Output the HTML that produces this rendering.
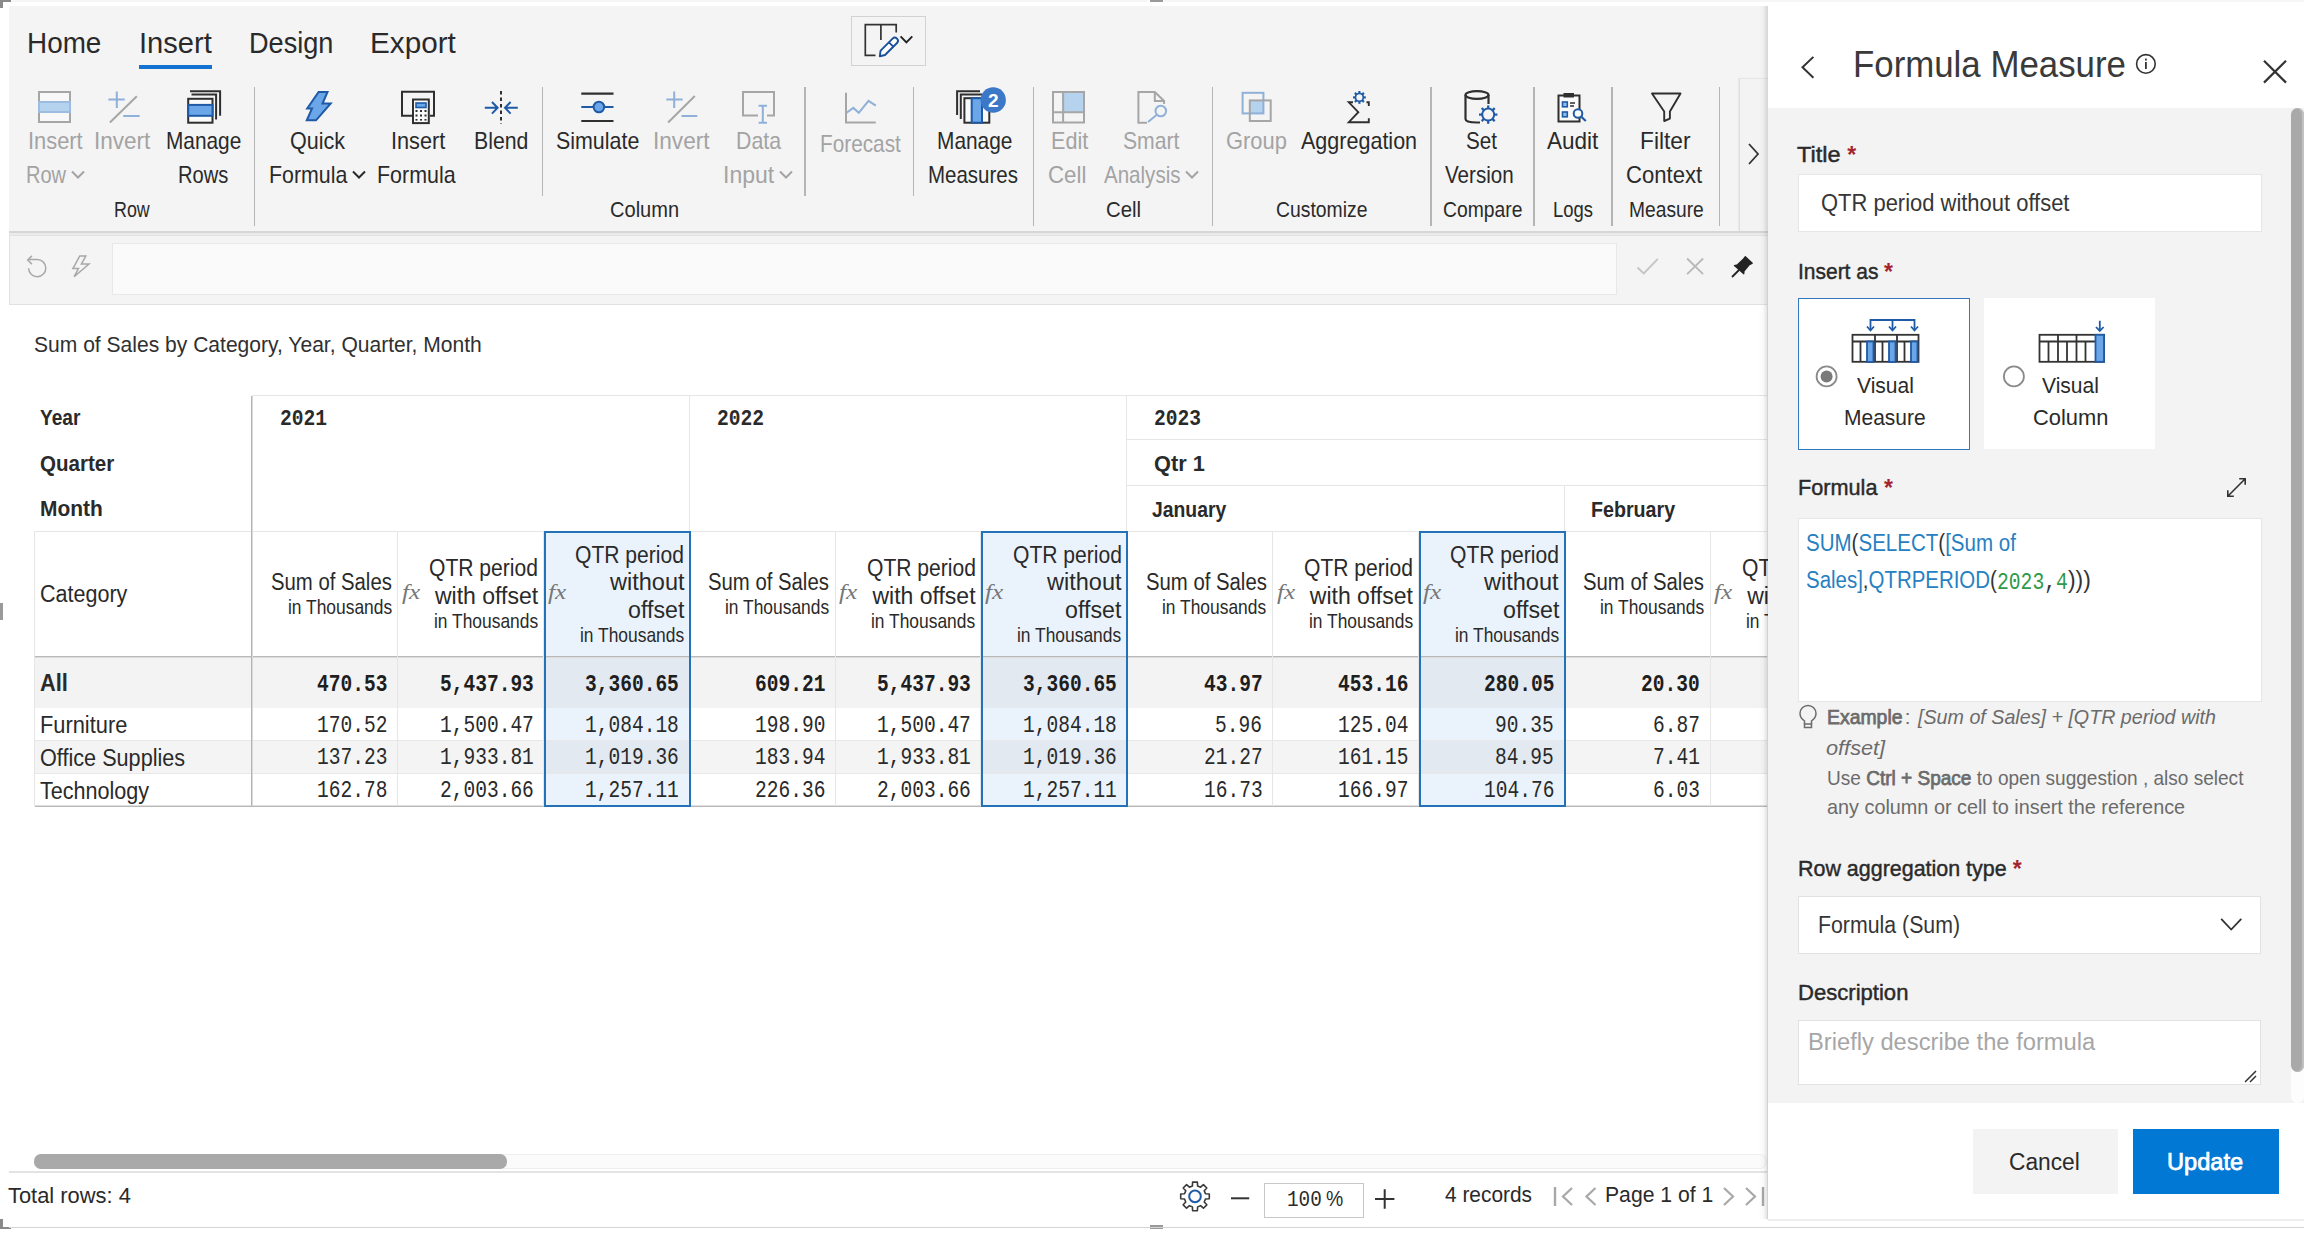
<!DOCTYPE html>
<html><head><meta charset="utf-8"><title>Formula Measure</title>
<style>
html,body{margin:0;padding:0;background:#fff;overflow:hidden;}
body{width:2304px;height:1235px;overflow:hidden;position:relative;font-family:"Liberation Sans",sans-serif;}
.a{position:absolute;}
.t{white-space:pre;transform-origin:0 50%;}
svg.a{overflow:visible;}
</style></head><body>
<div class="a" style="left:0;top:0;width:1768px;height:1235px;overflow:hidden">
<div class="a" style="left:9.0px;top:6.0px;width:1759.0px;height:225.0px;background:#f4f4f4;"></div>
<div class="a" style="left:9.0px;top:231.0px;width:1759.0px;height:2.0px;background:#d6d6d6;"></div>
<div class="a" style="left:9.0px;top:233.0px;width:1759.0px;height:2.0px;background:#ebebeb;"></div>
<div class="a" style="left:9.0px;top:235.0px;width:1759.0px;height:70.0px;background:#f4f4f4;border:1px solid #e2e2e2;box-sizing:border-box;"></div>
<div class="a" style="left:112.0px;top:243.0px;width:1505.0px;height:52.0px;background:#fafafa;border:1px solid #e8e8e8;box-sizing:border-box;"></div>
<div class="a" style="left:0.0px;top:0.0px;width:11.0px;height:2.0px;background:#8a8a8a;"></div>
<div class="a" style="left:0.0px;top:0.0px;width:3.0px;height:8.0px;background:#8a8a8a;"></div>
<div class="a" style="left:1150.0px;top:0.0px;width:13.0px;height:2.0px;background:#9a9a9a;"></div>
<div class="a" style="left:0.0px;top:1227.0px;width:11.0px;height:2.0px;background:#8a8a8a;"></div>
<div class="a" style="left:0.0px;top:1219.0px;width:3.0px;height:10.0px;background:#8a8a8a;"></div>
<div class="a" style="left:1150.0px;top:1225.0px;width:13.0px;height:4.0px;background:#9a9a9a;"></div>
<div class="a" style="left:0.0px;top:603.0px;width:3.0px;height:17.0px;background:#9a9a9a;"></div>
<div class="a" style="left:138.5px;top:64.5px;width:73.0px;height:4.5px;background:#1373d0;"></div>
<div class="a" style="left:851.0px;top:16.0px;width:75.0px;height:49.5px;border:1.5px solid #d2d2d2;box-sizing:border-box;"></div>
<svg class="a" style="left:860px;top:20px" width="60" height="42" viewBox="860 20 60 42">
<path d="M875.5 55.4 H865.3 V24.6 H896.2 V32.5 M880.9 24.6 V40.1" fill="none" stroke="#333" stroke-width="1.7"/>
<path d="M879.8 56.2 L880.6 50.6 L892.6 38.6 A3.1 3.1 0 0 1 897 43 L885 55 Z" fill="#fff" stroke="#1a4f9c" stroke-width="1.9" stroke-linejoin="round"/>
<path d="M888.9 42.3 L893.3 46.7" stroke="#1a4f9c" stroke-width="1.9"/>
<path d="M900.6 36.4 L906.4 42.4 L912.3 36.4" fill="none" stroke="#222" stroke-width="1.9"/>
</svg>
<div class="a" style="left:253.8px;top:86.5px;width:1.5px;height:139.5px;background:#b5b5b5;"></div>
<div class="a" style="left:1032.8px;top:86.5px;width:1.5px;height:139.5px;background:#b5b5b5;"></div>
<div class="a" style="left:1211.5px;top:86.5px;width:1.5px;height:139.5px;background:#b5b5b5;"></div>
<div class="a" style="left:1430.2px;top:86.5px;width:1.5px;height:139.5px;background:#b5b5b5;"></div>
<div class="a" style="left:1533.2px;top:86.5px;width:1.5px;height:139.5px;background:#b5b5b5;"></div>
<div class="a" style="left:1611.0px;top:86.5px;width:1.5px;height:139.5px;background:#b5b5b5;"></div>
<div class="a" style="left:1718.5px;top:86.5px;width:1.5px;height:139.5px;background:#b5b5b5;"></div>
<div class="a" style="left:541.6px;top:86.5px;width:1.5px;height:109.0px;background:#b5b5b5;"></div>
<div class="a" style="left:804.2px;top:86.5px;width:1.5px;height:109.0px;background:#b5b5b5;"></div>
<div class="a" style="left:912.6px;top:86.5px;width:1.5px;height:109.0px;background:#b5b5b5;"></div>
<svg class="a" style="left:70.0px;top:170.0px" width="16" height="10" viewBox="0 0 16 10"><path d="M2 1.5 L8 7.5 L14 1.5" fill="none" stroke="#a3a3a3" stroke-width="2"/></svg>
<svg class="a" style="left:351.3px;top:170.0px" width="16" height="10" viewBox="0 0 16 10"><path d="M2 1.5 L8 7.5 L14 1.5" fill="none" stroke="#2a2a2a" stroke-width="2"/></svg>
<svg class="a" style="left:777.6px;top:170.0px" width="16" height="10" viewBox="0 0 16 10"><path d="M2 1.5 L8 7.5 L14 1.5" fill="none" stroke="#a3a3a3" stroke-width="2"/></svg>
<svg class="a" style="left:1184.0px;top:170.0px" width="16" height="10" viewBox="0 0 16 10"><path d="M2 1.5 L8 7.5 L14 1.5" fill="none" stroke="#a3a3a3" stroke-width="2"/></svg>
<div class="a" style="left:1738.6px;top:77.8px;width:29.4px;height:153.2px;background:#f3f3f3;border-left:1.5px solid #dedede;border-top:1.5px solid #e6e6e6;box-sizing:border-box;box-shadow:-1px 0 1px rgba(0,0,0,0.04);"></div>
<svg class="a" style="left:1746px;top:142px" width="16" height="24" viewBox="0 0 16 24"><path d="M3 2 L12 12 L3 22" fill="none" stroke="#333" stroke-width="1.8"/></svg>

<svg class="a" style="left:0;top:0" width="1768" height="235" viewBox="0 0 1768 235">
<g fill="none" stroke-width="2">
 <!-- insert row -->
 <rect x="39" y="92" width="31" height="30" stroke="#a6a6a6" fill="#f8f8f8"/>
 <rect x="39" y="102" width="31" height="10" fill="#b5d2ef" stroke="#9cbde0"/>
 <!-- invert row -->
 <path d="M116.8 91.5 V108 M108.4 99.4 H124.7 M123.2 116.1 H139.6" stroke="#8fb0d8"/>
 <path d="M109.9 122.5 L136.8 96.2" stroke="#a6a6a6"/>
 <!-- manage rows -->
 <path d="M190 91.2 H220.1 V115.8" stroke="#2f2f2f"/>
 <path d="M191.5 94.6 H216.1 V119.5" stroke="#2f2f2f"/>
 <rect x="188.2" y="98.8" width="24.3" height="23.9" stroke="#2f2f2f" fill="#fafafa"/>
 <rect x="188.2" y="104.9" width="24.3" height="10.9" stroke="#1f5aa6" fill="#6aa6e8"/>
 <!-- quick formula -->
 <path d="M318.6 92 L327.5 92 L322.5 103.5 L330.7 103.5 L316 120.3 L306.8 120.3 L312 108.5 L307.2 108.5 Z" fill="#6aa6e8" stroke="#1f5aa6" stroke-linejoin="miter"/>
 <!-- insert formula -->
 <path d="M412 115.7 H402 V91.8 H434 V115.7 H430" stroke="#2f2f2f"/>
 <rect x="413" y="99.5" width="15.8" height="23.6" stroke="#2f2f2f" fill="#fafafa"/>
 <rect x="416" y="103" width="10" height="4.5" stroke="#1f5aa6" fill="#6aa6e8" stroke-width="1.6"/>
 <g fill="#2f2f2f" stroke="none"><rect x="415.5" y="110" width="2" height="2"/><rect x="420" y="110" width="2" height="2"/><rect x="424.5" y="110" width="2" height="2"/>
 <rect x="415.5" y="114.5" width="2" height="2"/><rect x="420" y="114.5" width="2" height="2"/><rect x="424.5" y="114.5" width="2" height="2"/>
 <rect x="415.5" y="119" width="2" height="1.6"/><rect x="420" y="119" width="2" height="1.6"/><rect x="424.5" y="119" width="2" height="1.6"/></g>
 <!-- blend -->
 <path d="M501 91 V124" stroke="#2f2f2f" stroke-dasharray="3.5 3"/>
 <path d="M484.8 107.8 H497.6 M492 102 L497.6 107.8 L492 113.6 M505 107.8 H517.8 M510.6 102 L505 107.8 L510.6 113.6" stroke="#1f5aa6"/>
 <!-- simulate -->
 <path d="M581.3 93.6 H613.5 M581.3 121 H613.5" stroke="#2f2f2f" stroke-width="2.2"/>
 <path d="M581.3 107 H613.5" stroke="#1f5aa6" stroke-width="2.2"/>
 <circle cx="598.9" cy="107" r="5.3" fill="#6aa6e8" stroke="#1f5aa6"/>
 <!-- invert col -->
 <path d="M674.2 91.5 V108 M666.3 99.4 H682.7 M681.5 116.1 H697.3" stroke="#8fb0d8"/>
 <path d="M668.1 122.5 L694.8 96" stroke="#a6a6a6"/>
 <!-- data input -->
 <path d="M758 115.5 H743 V92 H774 V115.5 H767" stroke="#a6a6a6"/>
 <path d="M762.8 105.7 V122.7 M758.6 105.7 H767 M758.6 122.7 H767" stroke="#8fb0d8"/>
 <!-- forecast -->
 <path d="M846 92.8 V122.5 H875.8" stroke="#a6a6a6"/>
 <path d="M846.6 112.8 L853.3 107.9 L858.8 112.8 L868.5 100.9 L875.8 105.7" stroke="#8fb0d8"/>
 <!-- manage measures -->
 <path d="M957.1 115 V91.2 H980" stroke="#2f2f2f"/>
 <path d="M960.8 119 V94.6 H982" stroke="#2f2f2f"/>
 <rect x="964.4" y="98.2" width="24.9" height="24.5" stroke="#2f2f2f" fill="#fafafa"/>
 <rect x="971.7" y="98.2" width="10.3" height="24.5" stroke="#1f5aa6" fill="#6aa6e8"/>
 <circle cx="993.2" cy="100" r="12.7" fill="#3b78c8" stroke="none"/>
 <!-- edit cell -->
 <rect x="1063.1" y="92" width="21" height="20.2" fill="#b5d2ef" stroke="none"/>
 <rect x="1053" y="92" width="31" height="30.5" stroke="#a6a6a6"/>
 <path d="M1063.1 92 V122.5 M1053 112.2 H1084" stroke="#a6a6a6"/>
 <!-- smart analysis -->
 <path d="M1147 122.7 H1138.4 V92 H1154.8 L1164.1 101 V104" stroke="#a6a6a6"/>
 <path d="M1154.8 92 V101 H1164.1" stroke="#a6a6a6"/>
 <circle cx="1160.8" cy="111" r="5.3" stroke="#8fb0d8"/>
 <path d="M1148 122 L1156.5 115" stroke="#8fb0d8"/>
 <!-- group -->
 <rect x="1249.8" y="100.4" width="13.6" height="13" fill="#b5d2ef" stroke="none"/>
 <rect x="1242.6" y="92.8" width="20.8" height="20.6" stroke="#8fb0d8"/>
 <rect x="1249.8" y="100.4" width="20.9" height="20.6" stroke="#a6a6a6"/>
 <!-- aggregation -->
 <path d="M1368.8 106 V102.3 H1366.5 M1353 102.3 H1348.8 L1358.3 112.2 L1348.8 122.2 H1368.8 V118.3" stroke="#2f2f2f" stroke-width="1.9" stroke-linejoin="miter"/>
 <!-- set version -->
 <path d="M1465.5 95 V119 Q1465.5 122.5 1477 122.5 H1480" stroke="#2f2f2f" stroke-width="2.2"/>
 <ellipse cx="1477" cy="95" rx="11.5" ry="3.8" stroke="#2f2f2f" stroke-width="2.2"/>
 <path d="M1488.5 95 V104" stroke="#2f2f2f" stroke-width="2.2"/>
 <!-- audit -->
 <rect x="1558.5" y="95.5" width="21" height="26" stroke="#2f2f2f" fill="#fafafa"/>
 <rect x="1563.5" y="93" width="10.5" height="4.5" fill="#2f2f2f" stroke="none"/>
 <rect x="1562.5" y="102" width="4.8" height="4.8" stroke="#1f5aa6" fill="#8fbdf0" stroke-width="1.6"/>
 <rect x="1562.5" y="112" width="4.8" height="4.8" stroke="#1f5aa6" fill="#8fbdf0" stroke-width="1.6"/>
 <path d="M1570 103 H1575 M1570 106 H1574" stroke="#2f2f2f" stroke-width="1.4"/>
 <circle cx="1578" cy="113.5" r="4.3" stroke="#1f5aa6" fill="#fafafa"/>
 <path d="M1581 116.5 L1585.8 121" stroke="#1f5aa6" stroke-width="2.2"/>
 <!-- filter -->
 <path d="M1652 93.5 H1680.5 L1669.9 111.5 V118.6 L1664.2 121 V111.5 Z" stroke="#2f2f2f" stroke-width="1.9" stroke-linejoin="round"/>
</g>
</svg>
<svg class="a" style="left:0;top:0" width="1768" height="235" viewBox="0 0 1768 235"><circle cx="1359.4" cy="97.4" r="6" fill="#f4f4f4"/><g><circle cx="1359.40" cy="97.40" r="3.90" fill="none" stroke="#1f5aa6" stroke-width="1.7"/><rect x="1358.31" y="91.00" width="2.18" height="2.50" fill="#1f5aa6" transform="rotate(0.0 1359.40 97.40)"/><rect x="1358.31" y="91.00" width="2.18" height="2.50" fill="#1f5aa6" transform="rotate(45.0 1359.40 97.40)"/><rect x="1358.31" y="91.00" width="2.18" height="2.50" fill="#1f5aa6" transform="rotate(90.0 1359.40 97.40)"/><rect x="1358.31" y="91.00" width="2.18" height="2.50" fill="#1f5aa6" transform="rotate(135.0 1359.40 97.40)"/><rect x="1358.31" y="91.00" width="2.18" height="2.50" fill="#1f5aa6" transform="rotate(180.0 1359.40 97.40)"/><rect x="1358.31" y="91.00" width="2.18" height="2.50" fill="#1f5aa6" transform="rotate(225.0 1359.40 97.40)"/><rect x="1358.31" y="91.00" width="2.18" height="2.50" fill="#1f5aa6" transform="rotate(270.0 1359.40 97.40)"/><rect x="1358.31" y="91.00" width="2.18" height="2.50" fill="#1f5aa6" transform="rotate(315.0 1359.40 97.40)"/></g><circle cx="1488.2" cy="114.2" r="8.5" fill="#f4f4f4"/><g><circle cx="1488.20" cy="114.60" r="6.00" fill="none" stroke="#1f5aa6" stroke-width="2.0"/><rect x="1487.10" y="105.40" width="2.21" height="3.20" fill="#1f5aa6" transform="rotate(0.0 1488.20 114.60)"/><rect x="1487.10" y="105.40" width="2.21" height="3.20" fill="#1f5aa6" transform="rotate(45.0 1488.20 114.60)"/><rect x="1487.10" y="105.40" width="2.21" height="3.20" fill="#1f5aa6" transform="rotate(90.0 1488.20 114.60)"/><rect x="1487.10" y="105.40" width="2.21" height="3.20" fill="#1f5aa6" transform="rotate(135.0 1488.20 114.60)"/><rect x="1487.10" y="105.40" width="2.21" height="3.20" fill="#1f5aa6" transform="rotate(180.0 1488.20 114.60)"/><rect x="1487.10" y="105.40" width="2.21" height="3.20" fill="#1f5aa6" transform="rotate(225.0 1488.20 114.60)"/><rect x="1487.10" y="105.40" width="2.21" height="3.20" fill="#1f5aa6" transform="rotate(270.0 1488.20 114.60)"/><rect x="1487.10" y="105.40" width="2.21" height="3.20" fill="#1f5aa6" transform="rotate(315.0 1488.20 114.60)"/></g></svg>
<svg class="a" style="left:0;top:235px" width="1768" height="70" viewBox="0 235 1768 70">
<g fill="none" stroke-width="1.6">
 <path d="M28.6 268.2 A8.6 8.6 0 1 0 37 259.5 H28" stroke="#a8a8a8" stroke-width="1.5"/>
 <path d="M31.9 255.9 L27.7 260 L31.9 264.1" stroke="#a8a8a8" stroke-width="1.5"/>
 <path d="M79.8 256 L85.8 256 L81.4 264.1 L89 264.1 L74.1 276.7 L78.5 268.6 L72.9 268.6 Z" stroke="#a8a8a8" stroke-width="1.5" stroke-linejoin="miter"/>
 <path d="M1637.5 267.5 L1643.8 273.4 L1657.8 258.9" stroke="#c4c4c4" stroke-width="1.8"/>
 <path d="M1687.1 258.5 L1703.1 274.1 M1703.1 258.5 L1687.1 274.1" stroke="#b8b8b8" stroke-width="1.8"/>
 <path d="M1732 277 L1739.5 269.5" stroke="#222" stroke-width="1.8"/>
 <path d="M1745.3 256.6 L1752.3 263.2 L1749 265 L1744 271 L1743.8 273.8 L1734.4 265.5 L1737.5 264.8 L1743 259.5 Z" fill="#222" stroke="#222" stroke-width="1.2" stroke-linejoin="round"/>
</g></svg>
<div class="a" style="left:34.6px;top:657.0px;width:1733.4px;height:50.5px;background:#f3f3f3;"></div>
<div class="a" style="left:34.6px;top:740.3px;width:1733.4px;height:33.5px;background:#f4f4f4;"></div>
<div class="a" style="left:543.6px;top:531.4px;width:145.8px;height:125.6px;background:#eaf3fc;"></div>
<div class="a" style="left:543.6px;top:657.0px;width:145.8px;height:50.5px;background:#e3e9f1;"></div>
<div class="a" style="left:543.6px;top:707.5px;width:145.8px;height:32.8px;background:#eaf3fc;"></div>
<div class="a" style="left:543.6px;top:740.3px;width:145.8px;height:33.5px;background:#e3e9f1;"></div>
<div class="a" style="left:543.6px;top:773.8px;width:145.8px;height:32.2px;background:#eaf3fc;"></div>
<div class="a" style="left:981.0px;top:531.4px;width:145.8px;height:125.6px;background:#eaf3fc;"></div>
<div class="a" style="left:981.0px;top:657.0px;width:145.8px;height:50.5px;background:#e3e9f1;"></div>
<div class="a" style="left:981.0px;top:707.5px;width:145.8px;height:32.8px;background:#eaf3fc;"></div>
<div class="a" style="left:981.0px;top:740.3px;width:145.8px;height:33.5px;background:#e3e9f1;"></div>
<div class="a" style="left:981.0px;top:773.8px;width:145.8px;height:32.2px;background:#eaf3fc;"></div>
<div class="a" style="left:1418.4px;top:531.4px;width:145.8px;height:125.6px;background:#eaf3fc;"></div>
<div class="a" style="left:1418.4px;top:657.0px;width:145.8px;height:50.5px;background:#e3e9f1;"></div>
<div class="a" style="left:1418.4px;top:707.5px;width:145.8px;height:32.8px;background:#eaf3fc;"></div>
<div class="a" style="left:1418.4px;top:740.3px;width:145.8px;height:33.5px;background:#e3e9f1;"></div>
<div class="a" style="left:1418.4px;top:773.8px;width:145.8px;height:32.2px;background:#eaf3fc;"></div>
<div class="a" style="left:252.0px;top:395.0px;width:1516.0px;height:1.0px;background:#e6e6e6;"></div>
<div class="a" style="left:1127.0px;top:439.0px;width:641.0px;height:1.0px;background:#e6e6e6;"></div>
<div class="a" style="left:1127.0px;top:485.0px;width:641.0px;height:1.0px;background:#e6e6e6;"></div>
<div class="a" style="left:35.0px;top:531.0px;width:1733.0px;height:1.0px;background:#e6e6e6;"></div>
<div class="a" style="left:34.6px;top:656.0px;width:1733.4px;height:1.0px;background:#b9b9b9;"></div>
<div class="a" style="left:34.6px;top:657.0px;width:1733.4px;height:1.0px;background:#dcdcdc;"></div>
<div class="a" style="left:35.0px;top:740.0px;width:1733.0px;height:1.0px;background:#e8e8e8;"></div>
<div class="a" style="left:35.0px;top:773.0px;width:1733.0px;height:1.0px;background:#e8e8e8;"></div>
<div class="a" style="left:34.6px;top:805.0px;width:1733.4px;height:1.0px;background:#dedede;"></div>
<div class="a" style="left:34.6px;top:806.0px;width:1733.4px;height:1.0px;background:#b9b9b9;"></div>
<div class="a" style="left:34.0px;top:531.0px;width:1.0px;height:275.0px;background:#e6e6e6;"></div>
<div class="a" style="left:251.0px;top:396.0px;width:1.0px;height:410.0px;background:#b4b4b4;"></div>
<div class="a" style="left:252.0px;top:396.0px;width:1.0px;height:410.0px;background:#dadada;"></div>
<div class="a" style="left:689.0px;top:396.0px;width:1.0px;height:410.0px;background:#e6e6e6;"></div>
<div class="a" style="left:1126.0px;top:396.0px;width:1.0px;height:410.0px;background:#e6e6e6;"></div>
<div class="a" style="left:1564.0px;top:485.0px;width:1.0px;height:321.0px;background:#e6e6e6;"></div>
<div class="a" style="left:397.0px;top:531.0px;width:1.0px;height:275.0px;background:#e6e6e6;"></div>
<div class="a" style="left:543.0px;top:531.0px;width:1.0px;height:275.0px;background:#e6e6e6;"></div>
<div class="a" style="left:835.0px;top:531.0px;width:1.0px;height:275.0px;background:#e6e6e6;"></div>
<div class="a" style="left:980.0px;top:531.0px;width:1.0px;height:275.0px;background:#e6e6e6;"></div>
<div class="a" style="left:1272.0px;top:531.0px;width:1.0px;height:275.0px;background:#e6e6e6;"></div>
<div class="a" style="left:1418.0px;top:531.0px;width:1.0px;height:275.0px;background:#e6e6e6;"></div>
<div class="a" style="left:1710.0px;top:531.0px;width:1.0px;height:275.0px;background:#e6e6e6;"></div>
<div class="a" style="left:544.0px;top:531.0px;width:146.8px;height:275.5px;border:2px solid #2372b8;box-sizing:border-box;"></div>
<div class="a" style="left:981.4px;top:531.0px;width:146.8px;height:275.5px;border:2px solid #2372b8;box-sizing:border-box;"></div>
<div class="a" style="left:1418.8px;top:531.0px;width:146.8px;height:275.5px;border:2px solid #2372b8;box-sizing:border-box;"></div>
<div class="a" style="left:34.0px;top:1154.3px;width:1733.0px;height:14.3px;background:#fbfbfb;border:1px solid #efefef;border-radius:7px;box-sizing:border-box;"></div>
<div class="a" style="left:34.0px;top:1154.3px;width:473.4px;height:14.3px;background:#a9a9a9;border-radius:7px;"></div>
<div class="a" style="left:9.0px;top:1171.0px;width:1758.0px;height:2.0px;background:#e3e3e3;"></div>
<svg class="a" style="left:1170px;top:1175px" width="600" height="50" viewBox="1170 1175 600 50">
<g fill="none" stroke-width="2">
<path d="M1209.30 1194.02 L1209.30 1198.78 L1205.48 1199.00 L1204.25 1201.97 L1206.80 1204.83 L1203.43 1208.20 L1200.57 1205.65 L1197.60 1206.88 L1197.38 1210.70 L1192.62 1210.70 L1192.40 1206.88 L1189.43 1205.65 L1186.57 1208.20 L1183.20 1204.83 L1185.75 1201.97 L1184.52 1199.00 L1180.70 1198.78 L1180.70 1194.02 L1184.52 1193.80 L1185.75 1190.83 L1183.20 1187.97 L1186.57 1184.60 L1189.43 1187.15 L1192.40 1185.92 L1192.62 1182.10 L1197.38 1182.10 L1197.60 1185.92 L1200.57 1187.15 L1203.43 1184.60 L1206.80 1187.97 L1204.25 1190.83 L1205.48 1193.80 Z" fill="none" stroke="#3a3a3a" stroke-width="1.6" stroke-linejoin="round"/>
 <circle cx="1195" cy="1196.4" r="5.8" stroke="#1f5aa6" stroke-width="2"/>
 <path d="M1231 1198.3 H1249.2" stroke="#333"/>
 <path d="M1375 1199 H1394.4 M1384.7 1189.3 V1208.7" stroke="#333"/>
 <path d="M1555 1187 V1206" stroke="#a8a8a8" stroke-width="2.4"/>
 <path d="M1572 1188 L1563 1196.5 L1572 1205" stroke="#a8a8a8" stroke-width="2.2"/>
 <path d="M1595.5 1188 L1586.5 1196.5 L1595.5 1205" stroke="#a8a8a8" stroke-width="2.2"/>
 <path d="M1724 1188 L1733 1196.5 L1724 1205" stroke="#a8a8a8" stroke-width="2.2"/>
 <path d="M1746 1188 L1755 1196.5 L1746 1205" stroke="#a8a8a8" stroke-width="2.2"/>
 <path d="M1763 1187 V1206" stroke="#a8a8a8" stroke-width="2.4"/>
</g></svg>
<div class="a" style="left:1264.4px;top:1182.5px;width:100.0px;height:35.5px;background:#fff;border:1.5px solid #c8c8c8;box-sizing:border-box;"></div>
<div class="a" style="left:1766.5px;top:235.0px;width:1.5px;height:985.0px;background:#eeeeee;"></div>
<div class="a t" style="left:27.41px;top:28.22px;font-family:'Liberation Sans', sans-serif;font-size:29.50px;line-height:29.50px;color:#2a2a2a;transform:scaleX(0.9448);">Home</div>
<div class="a t" style="left:139.15px;top:28.22px;font-family:'Liberation Sans', sans-serif;font-size:29.50px;line-height:29.50px;color:#2a2a2a;transform:scaleX(0.9862);">Insert</div>
<div class="a t" style="left:248.64px;top:28.22px;font-family:'Liberation Sans', sans-serif;font-size:29.50px;line-height:29.50px;color:#2a2a2a;transform:scaleX(0.9187);">Design</div>
<div class="a t" style="left:369.52px;top:28.22px;font-family:'Liberation Sans', sans-serif;font-size:29.50px;line-height:29.50px;color:#2a2a2a;transform:scaleX(1.0058);">Export</div>
<div class="a t" style="left:27.56px;top:129.82px;font-family:'Liberation Sans', sans-serif;font-size:23.60px;line-height:23.60px;color:#a3a3a3;transform:scaleX(0.9267);">Insert</div>
<div class="a t" style="left:25.70px;top:164.02px;font-family:'Liberation Sans', sans-serif;font-size:23.60px;line-height:23.60px;color:#a3a3a3;transform:scaleX(0.8493);">Row</div>
<div class="a t" style="left:94.41px;top:129.82px;font-family:'Liberation Sans', sans-serif;font-size:23.60px;line-height:23.60px;color:#a3a3a3;transform:scaleX(0.9555);">Invert</div>
<div class="a t" style="left:166.06px;top:129.82px;font-family:'Liberation Sans', sans-serif;font-size:23.60px;line-height:23.60px;color:#2a2a2a;transform:scaleX(0.8830);">Manage</div>
<div class="a t" style="left:178.11px;top:164.02px;font-family:'Liberation Sans', sans-serif;font-size:23.60px;line-height:23.60px;color:#2a2a2a;transform:scaleX(0.8540);">Rows</div>
<div class="a t" style="left:290.06px;top:129.82px;font-family:'Liberation Sans', sans-serif;font-size:23.60px;line-height:23.60px;color:#2a2a2a;transform:scaleX(0.9134);">Quick</div>
<div class="a t" style="left:269.13px;top:164.02px;font-family:'Liberation Sans', sans-serif;font-size:23.60px;line-height:23.60px;color:#2a2a2a;transform:scaleX(0.9047);">Formula</div>
<div class="a t" style="left:391.06px;top:129.82px;font-family:'Liberation Sans', sans-serif;font-size:23.60px;line-height:23.60px;color:#2a2a2a;transform:scaleX(0.9199);">Insert</div>
<div class="a t" style="left:376.81px;top:164.02px;font-family:'Liberation Sans', sans-serif;font-size:23.60px;line-height:23.60px;color:#2a2a2a;transform:scaleX(0.9082);">Formula</div>
<div class="a t" style="left:474.41px;top:129.82px;font-family:'Liberation Sans', sans-serif;font-size:23.60px;line-height:23.60px;color:#2a2a2a;transform:scaleX(0.9011);">Blend</div>
<div class="a t" style="left:556.06px;top:129.82px;font-family:'Liberation Sans', sans-serif;font-size:23.60px;line-height:23.60px;color:#2a2a2a;transform:scaleX(0.9073);">Simulate</div>
<div class="a t" style="left:653.21px;top:129.82px;font-family:'Liberation Sans', sans-serif;font-size:23.60px;line-height:23.60px;color:#a3a3a3;transform:scaleX(0.9589);">Invert</div>
<div class="a t" style="left:735.71px;top:129.82px;font-family:'Liberation Sans', sans-serif;font-size:23.60px;line-height:23.60px;color:#a3a3a3;transform:scaleX(0.9026);">Data</div>
<div class="a t" style="left:723.45px;top:164.02px;font-family:'Liberation Sans', sans-serif;font-size:23.60px;line-height:23.60px;color:#a3a3a3;transform:scaleX(0.9734);">Input</div>
<div class="a t" style="left:819.61px;top:132.92px;font-family:'Liberation Sans', sans-serif;font-size:23.60px;line-height:23.60px;color:#a3a3a3;transform:scaleX(0.8801);">Forecast</div>
<div class="a t" style="left:936.81px;top:129.82px;font-family:'Liberation Sans', sans-serif;font-size:23.60px;line-height:23.60px;color:#2a2a2a;transform:scaleX(0.8842);">Manage</div>
<div class="a t" style="left:927.66px;top:164.02px;font-family:'Liberation Sans', sans-serif;font-size:23.60px;line-height:23.60px;color:#2a2a2a;transform:scaleX(0.8677);">Measures</div>
<div class="a t" style="left:1050.61px;top:129.82px;font-family:'Liberation Sans', sans-serif;font-size:23.60px;line-height:23.60px;color:#a3a3a3;transform:scaleX(0.9147);">Edit</div>
<div class="a t" style="left:1048.01px;top:164.02px;font-family:'Liberation Sans', sans-serif;font-size:23.60px;line-height:23.60px;color:#a3a3a3;transform:scaleX(0.9442);">Cell</div>
<div class="a t" style="left:1123.46px;top:129.82px;font-family:'Liberation Sans', sans-serif;font-size:23.60px;line-height:23.60px;color:#a3a3a3;transform:scaleX(0.8975);">Smart</div>
<div class="a t" style="left:1103.97px;top:164.02px;font-family:'Liberation Sans', sans-serif;font-size:23.60px;line-height:23.60px;color:#a3a3a3;transform:scaleX(0.8706);">Analysis</div>
<div class="a t" style="left:1226.06px;top:129.82px;font-family:'Liberation Sans', sans-serif;font-size:23.60px;line-height:23.60px;color:#a3a3a3;transform:scaleX(0.9285);">Group</div>
<div class="a t" style="left:1301.16px;top:129.82px;font-family:'Liberation Sans', sans-serif;font-size:23.60px;line-height:23.60px;color:#2a2a2a;transform:scaleX(0.9123);">Aggregation</div>
<div class="a t" style="left:1465.71px;top:129.82px;font-family:'Liberation Sans', sans-serif;font-size:23.60px;line-height:23.60px;color:#2a2a2a;transform:scaleX(0.8748);">Set</div>
<div class="a t" style="left:1445.06px;top:164.02px;font-family:'Liberation Sans', sans-serif;font-size:23.60px;line-height:23.60px;color:#2a2a2a;transform:scaleX(0.8727);">Version</div>
<div class="a t" style="left:1547.31px;top:129.82px;font-family:'Liberation Sans', sans-serif;font-size:23.60px;line-height:23.60px;color:#2a2a2a;transform:scaleX(0.9555);">Audit</div>
<div class="a t" style="left:1640.46px;top:129.82px;font-family:'Liberation Sans', sans-serif;font-size:23.60px;line-height:23.60px;color:#2a2a2a;transform:scaleX(0.9628);">Filter</div>
<div class="a t" style="left:1625.81px;top:164.02px;font-family:'Liberation Sans', sans-serif;font-size:23.60px;line-height:23.60px;color:#2a2a2a;transform:scaleX(0.9370);">Context</div>
<div class="a t" style="left:114.14px;top:199.68px;font-family:'Liberation Sans', sans-serif;font-size:21.40px;line-height:21.40px;color:#2a2a2a;transform:scaleX(0.8345);">Row</div>
<div class="a t" style="left:610.14px;top:199.68px;font-family:'Liberation Sans', sans-serif;font-size:21.40px;line-height:21.40px;color:#2a2a2a;transform:scaleX(0.9375);">Column</div>
<div class="a t" style="left:1105.94px;top:199.68px;font-family:'Liberation Sans', sans-serif;font-size:21.40px;line-height:21.40px;color:#2a2a2a;transform:scaleX(0.9526);">Cell</div>
<div class="a t" style="left:1275.79px;top:199.68px;font-family:'Liberation Sans', sans-serif;font-size:21.40px;line-height:21.40px;color:#2a2a2a;transform:scaleX(0.9046);">Customize</div>
<div class="a t" style="left:1442.79px;top:199.68px;font-family:'Liberation Sans', sans-serif;font-size:21.40px;line-height:21.40px;color:#2a2a2a;transform:scaleX(0.9026);">Compare</div>
<div class="a t" style="left:1552.99px;top:199.68px;font-family:'Liberation Sans', sans-serif;font-size:21.40px;line-height:21.40px;color:#2a2a2a;transform:scaleX(0.8625);">Logs</div>
<div class="a t" style="left:1628.59px;top:199.68px;font-family:'Liberation Sans', sans-serif;font-size:21.40px;line-height:21.40px;color:#2a2a2a;transform:scaleX(0.8988);">Measure</div>
<div class="a t" style="left:987.91px;top:91.41px;font-family:'Liberation Sans', sans-serif;font-size:19.00px;line-height:19.00px;color:#fff;font-weight:bold;">2</div>
<div class="a t" style="left:34.05px;top:334.46px;font-family:'Liberation Sans', sans-serif;font-size:22.60px;line-height:22.60px;color:#303030;transform:scaleX(0.9318);">Sum of Sales by Category, Year, Quarter, Month</div>
<div class="a t" style="left:40.04px;top:407.37px;font-family:'Liberation Sans', sans-serif;font-size:22.00px;line-height:22.00px;color:#2a2a2a;font-weight:bold;transform:scaleX(0.8701);">Year</div>
<div class="a t" style="left:39.97px;top:452.77px;font-family:'Liberation Sans', sans-serif;font-size:22.00px;line-height:22.00px;color:#2a2a2a;font-weight:bold;transform:scaleX(0.9343);">Quarter</div>
<div class="a t" style="left:39.95px;top:498.27px;font-family:'Liberation Sans', sans-serif;font-size:22.00px;line-height:22.00px;color:#2a2a2a;font-weight:bold;transform:scaleX(0.9514);">Month</div>
<div class="a t" style="left:279.52px;top:408.65px;font-family:'Liberation Mono', monospace;font-size:22.00px;line-height:22.00px;color:#2a2a2a;font-weight:bold;transform:scaleX(0.8911);">2021</div>
<div class="a t" style="left:716.82px;top:408.65px;font-family:'Liberation Mono', monospace;font-size:22.00px;line-height:22.00px;color:#2a2a2a;font-weight:bold;transform:scaleX(0.8911);">2022</div>
<div class="a t" style="left:1154.22px;top:408.65px;font-family:'Liberation Mono', monospace;font-size:22.00px;line-height:22.00px;color:#2a2a2a;font-weight:bold;transform:scaleX(0.8911);">2023</div>
<div class="a t" style="left:1154.11px;top:452.97px;font-family:'Liberation Sans', sans-serif;font-size:22.00px;line-height:22.00px;color:#2a2a2a;font-weight:bold;transform:scaleX(0.9883);">Qtr 1</div>
<div class="a t" style="left:1152.43px;top:498.57px;font-family:'Liberation Sans', sans-serif;font-size:22.00px;line-height:22.00px;color:#2a2a2a;font-weight:bold;transform:scaleX(0.8800);">January</div>
<div class="a t" style="left:1590.62px;top:498.57px;font-family:'Liberation Sans', sans-serif;font-size:22.00px;line-height:22.00px;color:#2a2a2a;font-weight:bold;transform:scaleX(0.8938);">February</div>
<div class="a t" style="left:40.32px;top:582.83px;font-family:'Liberation Sans', sans-serif;font-size:23.00px;line-height:23.00px;color:#2a2a2a;transform:scaleX(0.9358);">Category</div>
<div class="a t" style="left:270.78px;top:570.93px;font-family:'Liberation Sans', sans-serif;font-size:23.00px;line-height:23.00px;color:#2a2a2a;transform:scaleX(0.8834);">Sum of Sales</div>
<div class="a t" style="left:287.62px;top:597.16px;font-family:'Liberation Sans', sans-serif;font-size:20.60px;line-height:20.60px;color:#2a2a2a;transform:scaleX(0.8448);">in Thousands</div>
<div class="a t" style="left:429.41px;top:556.73px;font-family:'Liberation Sans', sans-serif;font-size:23.00px;line-height:23.00px;color:#2a2a2a;transform:scaleX(0.9156);">QTR period</div>
<div class="a t" style="left:435.01px;top:585.33px;font-family:'Liberation Sans', sans-serif;font-size:23.00px;line-height:23.00px;color:#2a2a2a;">with offset</div>
<div class="a t" style="left:433.92px;top:610.56px;font-family:'Liberation Sans', sans-serif;font-size:20.60px;line-height:20.60px;color:#2a2a2a;transform:scaleX(0.8448);">in Thousands</div>
<div class="a t" style="left:401.94px;top:580.72px;font-family:'Liberation Sans', sans-serif;font-size:21.00px;line-height:21.00px;color:#777777;transform:scaleX(1.2000);"><span style="font-family:'Liberation Serif',serif;font-style:italic">fx</span></div>
<div class="a t" style="left:575.21px;top:543.93px;font-family:'Liberation Sans', sans-serif;font-size:23.00px;line-height:23.00px;color:#2a2a2a;transform:scaleX(0.9156);">QTR period</div>
<div class="a t" style="left:609.64px;top:571.03px;font-family:'Liberation Sans', sans-serif;font-size:23.00px;line-height:23.00px;color:#2a2a2a;transform:scaleX(1.0228);">without</div>
<div class="a t" style="left:627.82px;top:599.13px;font-family:'Liberation Sans', sans-serif;font-size:23.00px;line-height:23.00px;color:#2a2a2a;transform:scaleX(1.0089);">offset</div>
<div class="a t" style="left:579.72px;top:625.36px;font-family:'Liberation Sans', sans-serif;font-size:20.60px;line-height:20.60px;color:#2a2a2a;transform:scaleX(0.8448);">in Thousands</div>
<div class="a t" style="left:547.74px;top:580.72px;font-family:'Liberation Sans', sans-serif;font-size:21.00px;line-height:21.00px;color:#777777;transform:scaleX(1.2000);"><span style="font-family:'Liberation Serif',serif;font-style:italic">fx</span></div>
<div class="a t" style="left:708.18px;top:570.93px;font-family:'Liberation Sans', sans-serif;font-size:23.00px;line-height:23.00px;color:#2a2a2a;transform:scaleX(0.8834);">Sum of Sales</div>
<div class="a t" style="left:725.02px;top:597.16px;font-family:'Liberation Sans', sans-serif;font-size:20.60px;line-height:20.60px;color:#2a2a2a;transform:scaleX(0.8448);">in Thousands</div>
<div class="a t" style="left:866.81px;top:556.73px;font-family:'Liberation Sans', sans-serif;font-size:23.00px;line-height:23.00px;color:#2a2a2a;transform:scaleX(0.9156);">QTR period</div>
<div class="a t" style="left:872.41px;top:585.33px;font-family:'Liberation Sans', sans-serif;font-size:23.00px;line-height:23.00px;color:#2a2a2a;">with offset</div>
<div class="a t" style="left:871.32px;top:610.56px;font-family:'Liberation Sans', sans-serif;font-size:20.60px;line-height:20.60px;color:#2a2a2a;transform:scaleX(0.8448);">in Thousands</div>
<div class="a t" style="left:839.34px;top:580.72px;font-family:'Liberation Sans', sans-serif;font-size:21.00px;line-height:21.00px;color:#777777;transform:scaleX(1.2000);"><span style="font-family:'Liberation Serif',serif;font-style:italic">fx</span></div>
<div class="a t" style="left:1012.61px;top:543.93px;font-family:'Liberation Sans', sans-serif;font-size:23.00px;line-height:23.00px;color:#2a2a2a;transform:scaleX(0.9156);">QTR period</div>
<div class="a t" style="left:1047.04px;top:571.03px;font-family:'Liberation Sans', sans-serif;font-size:23.00px;line-height:23.00px;color:#2a2a2a;transform:scaleX(1.0228);">without</div>
<div class="a t" style="left:1065.22px;top:599.13px;font-family:'Liberation Sans', sans-serif;font-size:23.00px;line-height:23.00px;color:#2a2a2a;transform:scaleX(1.0089);">offset</div>
<div class="a t" style="left:1017.12px;top:625.36px;font-family:'Liberation Sans', sans-serif;font-size:20.60px;line-height:20.60px;color:#2a2a2a;transform:scaleX(0.8448);">in Thousands</div>
<div class="a t" style="left:985.14px;top:580.72px;font-family:'Liberation Sans', sans-serif;font-size:21.00px;line-height:21.00px;color:#777777;transform:scaleX(1.2000);"><span style="font-family:'Liberation Serif',serif;font-style:italic">fx</span></div>
<div class="a t" style="left:1145.58px;top:570.93px;font-family:'Liberation Sans', sans-serif;font-size:23.00px;line-height:23.00px;color:#2a2a2a;transform:scaleX(0.8834);">Sum of Sales</div>
<div class="a t" style="left:1162.42px;top:597.16px;font-family:'Liberation Sans', sans-serif;font-size:20.60px;line-height:20.60px;color:#2a2a2a;transform:scaleX(0.8448);">in Thousands</div>
<div class="a t" style="left:1304.21px;top:556.73px;font-family:'Liberation Sans', sans-serif;font-size:23.00px;line-height:23.00px;color:#2a2a2a;transform:scaleX(0.9156);">QTR period</div>
<div class="a t" style="left:1309.81px;top:585.33px;font-family:'Liberation Sans', sans-serif;font-size:23.00px;line-height:23.00px;color:#2a2a2a;">with offset</div>
<div class="a t" style="left:1308.72px;top:610.56px;font-family:'Liberation Sans', sans-serif;font-size:20.60px;line-height:20.60px;color:#2a2a2a;transform:scaleX(0.8448);">in Thousands</div>
<div class="a t" style="left:1276.74px;top:580.72px;font-family:'Liberation Sans', sans-serif;font-size:21.00px;line-height:21.00px;color:#777777;transform:scaleX(1.2000);"><span style="font-family:'Liberation Serif',serif;font-style:italic">fx</span></div>
<div class="a t" style="left:1450.01px;top:543.93px;font-family:'Liberation Sans', sans-serif;font-size:23.00px;line-height:23.00px;color:#2a2a2a;transform:scaleX(0.9156);">QTR period</div>
<div class="a t" style="left:1484.44px;top:571.03px;font-family:'Liberation Sans', sans-serif;font-size:23.00px;line-height:23.00px;color:#2a2a2a;transform:scaleX(1.0228);">without</div>
<div class="a t" style="left:1502.62px;top:599.13px;font-family:'Liberation Sans', sans-serif;font-size:23.00px;line-height:23.00px;color:#2a2a2a;transform:scaleX(1.0089);">offset</div>
<div class="a t" style="left:1454.52px;top:625.36px;font-family:'Liberation Sans', sans-serif;font-size:20.60px;line-height:20.60px;color:#2a2a2a;transform:scaleX(0.8448);">in Thousands</div>
<div class="a t" style="left:1422.54px;top:580.72px;font-family:'Liberation Sans', sans-serif;font-size:21.00px;line-height:21.00px;color:#777777;transform:scaleX(1.2000);"><span style="font-family:'Liberation Serif',serif;font-style:italic">fx</span></div>
<div class="a t" style="left:1582.98px;top:570.93px;font-family:'Liberation Sans', sans-serif;font-size:23.00px;line-height:23.00px;color:#2a2a2a;transform:scaleX(0.8834);">Sum of Sales</div>
<div class="a t" style="left:1599.82px;top:597.16px;font-family:'Liberation Sans', sans-serif;font-size:20.60px;line-height:20.60px;color:#2a2a2a;transform:scaleX(0.8448);">in Thousands</div>
<div class="a t" style="left:1741.61px;top:556.73px;font-family:'Liberation Sans', sans-serif;font-size:23.00px;line-height:23.00px;color:#2a2a2a;transform:scaleX(0.9156);">QTR period</div>
<div class="a t" style="left:1747.21px;top:585.33px;font-family:'Liberation Sans', sans-serif;font-size:23.00px;line-height:23.00px;color:#2a2a2a;">with offset</div>
<div class="a t" style="left:1746.12px;top:610.56px;font-family:'Liberation Sans', sans-serif;font-size:20.60px;line-height:20.60px;color:#2a2a2a;transform:scaleX(0.8448);">in Thousands</div>
<div class="a t" style="left:1714.14px;top:580.72px;font-family:'Liberation Sans', sans-serif;font-size:21.00px;line-height:21.00px;color:#777777;transform:scaleX(1.2000);"><span style="font-family:'Liberation Serif',serif;font-style:italic">fx</span></div>
<div class="a t" style="left:40.31px;top:671.73px;font-family:'Liberation Sans', sans-serif;font-size:23.00px;line-height:23.00px;color:#2a2a2a;font-weight:bold;transform:scaleX(0.9472);">All</div>
<div class="a t" style="left:317.17px;top:673.58px;font-family:'Liberation Mono', monospace;font-size:23.00px;line-height:23.00px;color:#1e1e1e;font-weight:bold;transform:scaleX(0.8500);">470.53</div>
<div class="a t" style="left:439.52px;top:673.58px;font-family:'Liberation Mono', monospace;font-size:23.00px;line-height:23.00px;color:#1e1e1e;font-weight:bold;transform:scaleX(0.8500);">5,437.93</div>
<div class="a t" style="left:585.32px;top:673.58px;font-family:'Liberation Mono', monospace;font-size:23.00px;line-height:23.00px;color:#1e1e1e;font-weight:bold;transform:scaleX(0.8500);">3,360.65</div>
<div class="a t" style="left:754.57px;top:673.58px;font-family:'Liberation Mono', monospace;font-size:23.00px;line-height:23.00px;color:#1e1e1e;font-weight:bold;transform:scaleX(0.8500);">609.21</div>
<div class="a t" style="left:876.92px;top:673.58px;font-family:'Liberation Mono', monospace;font-size:23.00px;line-height:23.00px;color:#1e1e1e;font-weight:bold;transform:scaleX(0.8500);">5,437.93</div>
<div class="a t" style="left:1022.72px;top:673.58px;font-family:'Liberation Mono', monospace;font-size:23.00px;line-height:23.00px;color:#1e1e1e;font-weight:bold;transform:scaleX(0.8500);">3,360.65</div>
<div class="a t" style="left:1203.71px;top:673.58px;font-family:'Liberation Mono', monospace;font-size:23.00px;line-height:23.00px;color:#1e1e1e;font-weight:bold;transform:scaleX(0.8500);">43.97</div>
<div class="a t" style="left:1337.77px;top:673.58px;font-family:'Liberation Mono', monospace;font-size:23.00px;line-height:23.00px;color:#1e1e1e;font-weight:bold;transform:scaleX(0.8500);">453.16</div>
<div class="a t" style="left:1483.57px;top:673.58px;font-family:'Liberation Mono', monospace;font-size:23.00px;line-height:23.00px;color:#1e1e1e;font-weight:bold;transform:scaleX(0.8500);">280.05</div>
<div class="a t" style="left:1641.11px;top:673.58px;font-family:'Liberation Mono', monospace;font-size:23.00px;line-height:23.00px;color:#1e1e1e;font-weight:bold;transform:scaleX(0.8500);">20.30</div>
<div class="a t" style="left:40.31px;top:713.93px;font-family:'Liberation Sans', sans-serif;font-size:23.00px;line-height:23.00px;color:#2a2a2a;transform:scaleX(0.9489);">Furniture</div>
<div class="a t" style="left:317.17px;top:715.38px;font-family:'Liberation Mono', monospace;font-size:23.00px;line-height:23.00px;color:#2a2a2a;transform:scaleX(0.8500);">170.52</div>
<div class="a t" style="left:439.52px;top:715.38px;font-family:'Liberation Mono', monospace;font-size:23.00px;line-height:23.00px;color:#2a2a2a;transform:scaleX(0.8500);">1,500.47</div>
<div class="a t" style="left:585.32px;top:715.38px;font-family:'Liberation Mono', monospace;font-size:23.00px;line-height:23.00px;color:#2a2a2a;transform:scaleX(0.8500);">1,084.18</div>
<div class="a t" style="left:754.57px;top:715.38px;font-family:'Liberation Mono', monospace;font-size:23.00px;line-height:23.00px;color:#2a2a2a;transform:scaleX(0.8500);">198.90</div>
<div class="a t" style="left:876.92px;top:715.38px;font-family:'Liberation Mono', monospace;font-size:23.00px;line-height:23.00px;color:#2a2a2a;transform:scaleX(0.8500);">1,500.47</div>
<div class="a t" style="left:1022.72px;top:715.38px;font-family:'Liberation Mono', monospace;font-size:23.00px;line-height:23.00px;color:#2a2a2a;transform:scaleX(0.8500);">1,084.18</div>
<div class="a t" style="left:1215.44px;top:715.38px;font-family:'Liberation Mono', monospace;font-size:23.00px;line-height:23.00px;color:#2a2a2a;transform:scaleX(0.8500);">5.96</div>
<div class="a t" style="left:1337.77px;top:715.38px;font-family:'Liberation Mono', monospace;font-size:23.00px;line-height:23.00px;color:#2a2a2a;transform:scaleX(0.8500);">125.04</div>
<div class="a t" style="left:1495.31px;top:715.38px;font-family:'Liberation Mono', monospace;font-size:23.00px;line-height:23.00px;color:#2a2a2a;transform:scaleX(0.8500);">90.35</div>
<div class="a t" style="left:1652.84px;top:715.38px;font-family:'Liberation Mono', monospace;font-size:23.00px;line-height:23.00px;color:#2a2a2a;transform:scaleX(0.8500);">6.87</div>
<div class="a t" style="left:40.32px;top:746.93px;font-family:'Liberation Sans', sans-serif;font-size:23.00px;line-height:23.00px;color:#2a2a2a;transform:scaleX(0.9407);">Office Supplies</div>
<div class="a t" style="left:317.17px;top:746.58px;font-family:'Liberation Mono', monospace;font-size:23.00px;line-height:23.00px;color:#2a2a2a;transform:scaleX(0.8500);">137.23</div>
<div class="a t" style="left:439.52px;top:746.58px;font-family:'Liberation Mono', monospace;font-size:23.00px;line-height:23.00px;color:#2a2a2a;transform:scaleX(0.8500);">1,933.81</div>
<div class="a t" style="left:585.32px;top:746.58px;font-family:'Liberation Mono', monospace;font-size:23.00px;line-height:23.00px;color:#2a2a2a;transform:scaleX(0.8500);">1,019.36</div>
<div class="a t" style="left:754.57px;top:746.58px;font-family:'Liberation Mono', monospace;font-size:23.00px;line-height:23.00px;color:#2a2a2a;transform:scaleX(0.8500);">183.94</div>
<div class="a t" style="left:876.92px;top:746.58px;font-family:'Liberation Mono', monospace;font-size:23.00px;line-height:23.00px;color:#2a2a2a;transform:scaleX(0.8500);">1,933.81</div>
<div class="a t" style="left:1022.72px;top:746.58px;font-family:'Liberation Mono', monospace;font-size:23.00px;line-height:23.00px;color:#2a2a2a;transform:scaleX(0.8500);">1,019.36</div>
<div class="a t" style="left:1203.71px;top:746.58px;font-family:'Liberation Mono', monospace;font-size:23.00px;line-height:23.00px;color:#2a2a2a;transform:scaleX(0.8500);">21.27</div>
<div class="a t" style="left:1337.77px;top:746.58px;font-family:'Liberation Mono', monospace;font-size:23.00px;line-height:23.00px;color:#2a2a2a;transform:scaleX(0.8500);">161.15</div>
<div class="a t" style="left:1495.31px;top:746.58px;font-family:'Liberation Mono', monospace;font-size:23.00px;line-height:23.00px;color:#2a2a2a;transform:scaleX(0.8500);">84.95</div>
<div class="a t" style="left:1652.84px;top:746.58px;font-family:'Liberation Mono', monospace;font-size:23.00px;line-height:23.00px;color:#2a2a2a;transform:scaleX(0.8500);">7.41</div>
<div class="a t" style="left:40.32px;top:779.93px;font-family:'Liberation Sans', sans-serif;font-size:23.00px;line-height:23.00px;color:#2a2a2a;transform:scaleX(0.9380);">Technology</div>
<div class="a t" style="left:317.17px;top:779.78px;font-family:'Liberation Mono', monospace;font-size:23.00px;line-height:23.00px;color:#2a2a2a;transform:scaleX(0.8500);">162.78</div>
<div class="a t" style="left:439.52px;top:779.78px;font-family:'Liberation Mono', monospace;font-size:23.00px;line-height:23.00px;color:#2a2a2a;transform:scaleX(0.8500);">2,003.66</div>
<div class="a t" style="left:585.32px;top:779.78px;font-family:'Liberation Mono', monospace;font-size:23.00px;line-height:23.00px;color:#2a2a2a;transform:scaleX(0.8500);">1,257.11</div>
<div class="a t" style="left:754.57px;top:779.78px;font-family:'Liberation Mono', monospace;font-size:23.00px;line-height:23.00px;color:#2a2a2a;transform:scaleX(0.8500);">226.36</div>
<div class="a t" style="left:876.92px;top:779.78px;font-family:'Liberation Mono', monospace;font-size:23.00px;line-height:23.00px;color:#2a2a2a;transform:scaleX(0.8500);">2,003.66</div>
<div class="a t" style="left:1022.72px;top:779.78px;font-family:'Liberation Mono', monospace;font-size:23.00px;line-height:23.00px;color:#2a2a2a;transform:scaleX(0.8500);">1,257.11</div>
<div class="a t" style="left:1203.71px;top:779.78px;font-family:'Liberation Mono', monospace;font-size:23.00px;line-height:23.00px;color:#2a2a2a;transform:scaleX(0.8500);">16.73</div>
<div class="a t" style="left:1337.77px;top:779.78px;font-family:'Liberation Mono', monospace;font-size:23.00px;line-height:23.00px;color:#2a2a2a;transform:scaleX(0.8500);">166.97</div>
<div class="a t" style="left:1483.57px;top:779.78px;font-family:'Liberation Mono', monospace;font-size:23.00px;line-height:23.00px;color:#2a2a2a;transform:scaleX(0.8500);">104.76</div>
<div class="a t" style="left:1652.84px;top:779.78px;font-family:'Liberation Mono', monospace;font-size:23.00px;line-height:23.00px;color:#2a2a2a;transform:scaleX(0.8500);">6.03</div>
<div class="a t" style="left:8.01px;top:1184.86px;font-family:'Liberation Sans', sans-serif;font-size:22.60px;line-height:22.60px;color:#2a2a2a;transform:scaleX(0.9683);">Total rows: 4</div>
<div class="a t" style="left:1287.03px;top:1189.85px;font-family:'Liberation Mono', monospace;font-size:22.00px;line-height:22.00px;color:#2a2a2a;transform:scaleX(0.8800);">100</div>
<div class="a t" style="left:1326.03px;top:1188.07px;font-family:'Liberation Sans', sans-serif;font-size:22.00px;line-height:22.00px;color:#2a2a2a;transform:scaleX(0.8823);">%</div>
<div class="a t" style="left:1444.76px;top:1183.66px;font-family:'Liberation Sans', sans-serif;font-size:22.60px;line-height:22.60px;color:#2a2a2a;transform:scaleX(0.9238);">4 records</div>
<div class="a t" style="left:1604.94px;top:1183.66px;font-family:'Liberation Sans', sans-serif;font-size:22.60px;line-height:22.60px;color:#2a2a2a;transform:scaleX(0.9371);">Page 1 of 1</div>
</div>
<div class="a" style="left:0;top:0;width:2304px;height:1235px">
<div class="a" style="left:9.0px;top:1226.5px;width:2295.0px;height:1.5px;background:#d4d4d4;"></div>
<div class="a" style="left:1768.0px;top:0.0px;width:536.0px;height:1219.0px;background:#ffffff;"></div>
<div class="a" style="left:1768.0px;top:108.0px;width:536.0px;height:995.0px;background:#f3f3f3;"></div>
<div class="a" style="left:1758.0px;top:6.0px;width:10.0px;height:1213.0px;background:linear-gradient(to right, rgba(0,0,0,0), rgba(0,0,0,0.02) 50%, rgba(0,0,0,0.13));"></div>
<div class="a" style="left:12.0px;top:0.0px;width:1136.0px;height:1.5px;background:#f6f6f6;"></div>
<div class="a" style="left:1164.0px;top:0.0px;width:1140.0px;height:1.5px;background:#f6f6f6;"></div>
<div class="a" style="left:1768.0px;top:1219.0px;width:536.0px;height:1.5px;background:#eeeeee;"></div>
<div class="a" style="left:2291.0px;top:1050.0px;width:13.0px;height:52.5px;background:#fdfdfd;border-radius:6.5px;"></div>
<div class="a" style="left:2291.0px;top:108.0px;width:13.0px;height:964.0px;background:#a9a9a9;border-radius:6.5px;box-shadow:inset -2px 0 1px #c2c2c2;"></div>
<svg class="a" style="left:1795px;top:45px" width="500" height="45" viewBox="1795 45 500 45">
<g fill="none" stroke="#333" stroke-width="2">
<path d="M1813.4 56.9 L1802.5 67.3 L1813.4 77.7"/>
<circle cx="2145.9" cy="63.9" r="9.3" stroke-width="1.6"/>
<path d="M2264 60.7 L2286 82.6 M2286 60.7 L2264 82.6" stroke-width="2.2"/>
</g><rect x="2145" y="62" width="1.8" height="7" fill="#333"/><rect x="2145" y="58.6" width="1.8" height="1.9" fill="#333"/></svg>
<div class="a" style="left:1797.8px;top:174.1px;width:463.9px;height:57.9px;background:#fff;border:1.5px solid #e6e6e6;box-sizing:border-box;"></div>
<div class="a" style="left:1984.4px;top:298.4px;width:170.7px;height:150.9px;background:#fff;"></div>
<div class="a" style="left:1797.5px;top:298.0px;width:172.5px;height:151.5px;background:#fff;border:1.6px solid #3479bd;box-sizing:border-box;"></div>
<svg class="a" style="left:1800px;top:300px" width="360" height="150" viewBox="1800 300 360 150">
<circle cx="1826.6" cy="376.4" r="10" fill="#fff" stroke="#8a8a8a" stroke-width="1.8"/>
<circle cx="1826.6" cy="376.4" r="6" fill="#7a7a7a"/>
<circle cx="2013.9" cy="376.4" r="10" fill="#fff" stroke="#8a8a8a" stroke-width="1.8"/>
<g fill="none" stroke-width="1.8">
 <rect x="1852.5" y="334.8" width="66" height="27" stroke="#333"/>
 <path d="M1852.5 341.5 H1918.5" stroke="#333"/>
 <path d="M1875 334.8 V362 M1897 334.8 V362 M1860.5 341.5 V362 M1882.5 341.5 V362 M1904.5 341.5 V362" stroke="#333"/>
 <rect x="1867" y="341.5" width="6.5" height="20.5" fill="#6aa6e8" stroke="#1f5aa6"/>
 <rect x="1889" y="341.5" width="6.5" height="20.5" fill="#6aa6e8" stroke="#1f5aa6"/>
 <rect x="1911" y="341.5" width="6.5" height="20.5" fill="#6aa6e8" stroke="#1f5aa6"/>
 <path d="M1870.5 330 V320 H1914.5 V330 M1892.5 320 V330" stroke="#1f5aa6"/>
 <path d="M1867 326.5 L1870.5 330.5 L1874 326.5 M1889 326.5 L1892.5 330.5 L1896 326.5 M1911 326.5 L1914.5 330.5 L1918 326.5" stroke="#1f5aa6"/>
 <rect x="2039.5" y="334.8" width="64.5" height="27" stroke="#333"/>
 <path d="M2039.5 341.5 H2104" stroke="#333"/>
 <path d="M2058 334.8 V362 M2076.5 334.8 V362 M2048.5 341.5 V362 M2067 341.5 V362 M2085.5 341.5 V362" stroke="#333"/>
 <rect x="2095.5" y="334.8" width="8.5" height="27" fill="#6aa6e8" stroke="#1f5aa6"/>
 <path d="M2099.8 320.7 V331 M2096 327 L2099.8 331 L2103.6 327" stroke="#1f5aa6"/>
</g></svg>
<svg class="a" style="left:2222px;top:473px" width="30" height="30" viewBox="2222 473 30 30">
<g fill="none" stroke="#333" stroke-width="1.6"><path d="M2227.8 496.2 L2245.2 478.8 M2239.2 478.8 H2245.2 V484.8 M2227.8 490.2 V496.2 H2233.8"/></g></svg>
<div class="a" style="left:1797.8px;top:518.4px;width:463.9px;height:183.2px;background:#fff;border:1.5px solid #e6e6e6;box-sizing:border-box;"></div>
<svg class="a" style="left:1796px;top:703px" width="24" height="30" viewBox="1796 703 24 30">
<g fill="none" stroke="#6b6b6b" stroke-width="1.5"><path d="M1804.5 724 V721 C1801 718.5 1800 715.5 1800 713.5 A8 8 0 0 1 1816 713.5 C1816 715.5 1815 718.5 1811.5 721 V724"/><path d="M1804.5 724 H1811.5 V727.5 H1804.5 Z"/></g></svg>
<div class="a" style="left:1798.2px;top:896.4px;width:463.2px;height:57.9px;background:#fff;border:1.5px solid #e2e2e2;box-sizing:border-box;"></div>
<svg class="a" style="left:2218px;top:914px" width="26" height="20" viewBox="2218 914 26 20"><path d="M2221.2 918.8 L2231.2 929.5 L2241.3 918.8" fill="none" stroke="#333" stroke-width="1.8"/></svg>
<div class="a" style="left:1798.2px;top:1020.2px;width:463.2px;height:64.4px;background:#fff;border:1.5px solid #e2e2e2;box-sizing:border-box;"></div>
<svg class="a" style="left:2242px;top:1066px" width="18" height="18" viewBox="2242 1066 18 18"><path d="M2245 1082 L2256 1071 M2250 1082 L2256 1076" fill="none" stroke="#333" stroke-width="1.5"/></svg>
<div class="a" style="left:1972.6px;top:1128.9px;width:145.2px;height:64.9px;background:#f3f3f3;"></div>
<div class="a" style="left:2133.0px;top:1128.9px;width:145.7px;height:64.9px;background:#0078d4;"></div>
<div class="a t" style="left:1852.96px;top:46.96px;font-family:'Liberation Sans', sans-serif;font-size:36.30px;line-height:36.30px;color:#3a3a3a;transform:scaleX(0.9595);">Formula Measure</div>
<div class="a t" style="left:1797.43px;top:142.70px;font-family:'Liberation Sans', sans-serif;font-size:22.80px;line-height:22.80px;color:#2a2a2a;-webkit-text-stroke:0.45px #2a2a2a;transform:scaleX(1.0305);">Title</div>
<div class="a t" style="left:1847.15px;top:143.53px;font-family:'Liberation Sans', sans-serif;font-size:23.00px;line-height:23.00px;color:#a4262c;font-weight:bold;">*</div>
<div class="a t" style="left:1820.90px;top:192.27px;font-family:'Liberation Sans', sans-serif;font-size:23.30px;line-height:23.30px;color:#363636;transform:scaleX(0.9421);">QTR period without offset</div>
<div class="a t" style="left:1797.55px;top:260.10px;font-family:'Liberation Sans', sans-serif;font-size:22.80px;line-height:22.80px;color:#2a2a2a;-webkit-text-stroke:0.45px #2a2a2a;transform:scaleX(0.9198);">Insert as</div>
<div class="a t" style="left:1884.05px;top:260.93px;font-family:'Liberation Sans', sans-serif;font-size:23.00px;line-height:23.00px;color:#a4262c;font-weight:bold;">*</div>
<div class="a t" style="left:1856.54px;top:373.60px;font-family:'Liberation Sans', sans-serif;font-size:22.80px;line-height:22.80px;color:#2a2a2a;transform:scaleX(0.9228);">Visual</div>
<div class="a t" style="left:1844.49px;top:406.10px;font-family:'Liberation Sans', sans-serif;font-size:22.80px;line-height:22.80px;color:#2a2a2a;transform:scaleX(0.9202);">Measure</div>
<div class="a t" style="left:2042.34px;top:373.60px;font-family:'Liberation Sans', sans-serif;font-size:22.80px;line-height:22.80px;color:#2a2a2a;transform:scaleX(0.9228);">Visual</div>
<div class="a t" style="left:2032.99px;top:406.10px;font-family:'Liberation Sans', sans-serif;font-size:22.80px;line-height:22.80px;color:#2a2a2a;transform:scaleX(0.9601);">Column</div>
<div class="a t" style="left:1797.52px;top:476.00px;font-family:'Liberation Sans', sans-serif;font-size:22.80px;line-height:22.80px;color:#2a2a2a;-webkit-text-stroke:0.45px #2a2a2a;transform:scaleX(0.9499);">Formula</div>
<div class="a t" style="left:1884.05px;top:476.83px;font-family:'Liberation Sans', sans-serif;font-size:23.00px;line-height:23.00px;color:#a4262c;font-weight:bold;">*</div>
<div class="a t" style="left:1805.77px;top:531.97px;font-family:'Liberation Sans', sans-serif;font-size:23.30px;line-height:23.30px;color:#333;transform:scaleX(0.8809);"><span style="color:#2680c2">SUM</span>(<span style="color:#2680c2">SELECT</span>(<span style="color:#2680c2">[Sum of</span></div>
<div class="a t" style="left:1805.78px;top:569.47px;font-family:'Liberation Sans', sans-serif;font-size:23.30px;line-height:23.30px;color:#333;transform:scaleX(0.8775);"><span style="color:#2680c2">Sales]</span>,<span style="color:#2680c2">QTRPERIOD</span>(</div>
<div class="a t" style="left:1996.92px;top:571.58px;font-family:'Liberation Mono', monospace;font-size:23.00px;line-height:23.00px;color:#2f9a48;transform:scaleX(0.8551);">2023<span style="color:#333">,</span>4</div>
<div class="a t" style="left:2068.36px;top:569.47px;font-family:'Liberation Sans', sans-serif;font-size:23.30px;line-height:23.30px;color:#333;transform:scaleX(0.9821);">)))</div>
<div class="a t" style="left:1826.53px;top:707.30px;font-family:'Liberation Sans', sans-serif;font-size:20.20px;line-height:20.20px;color:#6b6b6b;-webkit-text-stroke:0.75px #6b6b6b;transform:scaleX(0.9614);">Example</div>
<div class="a t" style="left:1904.79px;top:707.30px;font-family:'Liberation Sans', sans-serif;font-size:20.20px;line-height:20.20px;color:#6b6b6b;">:</div>
<div class="a t" style="left:1918.12px;top:707.30px;font-family:'Liberation Sans', sans-serif;font-size:20.20px;line-height:20.20px;color:#6b6b6b;font-style:italic;transform:scaleX(0.9747);">[Sum of Sales] + [QTR period with</div>
<div class="a t" style="left:1826.41px;top:737.90px;font-family:'Liberation Sans', sans-serif;font-size:20.20px;line-height:20.20px;color:#6b6b6b;font-style:italic;transform:scaleX(1.0751);">offset]</div>
<div class="a t" style="left:1826.55px;top:767.50px;font-family:'Liberation Sans', sans-serif;font-size:20.20px;line-height:20.20px;color:#6b6b6b;transform:scaleX(0.9430);">Use <span style="-webkit-text-stroke:0.75px #6b6b6b">Ctrl + Space</span> to open suggestion , also select</div>
<div class="a t" style="left:1826.51px;top:796.70px;font-family:'Liberation Sans', sans-serif;font-size:20.20px;line-height:20.20px;color:#6b6b6b;transform:scaleX(0.9820);">any column or cell to insert the reference</div>
<div class="a t" style="left:1797.53px;top:857.20px;font-family:'Liberation Sans', sans-serif;font-size:22.80px;line-height:22.80px;color:#2a2a2a;-webkit-text-stroke:0.45px #2a2a2a;transform:scaleX(0.9407);">Row aggregation type</div>
<div class="a t" style="left:2012.85px;top:858.03px;font-family:'Liberation Sans', sans-serif;font-size:23.00px;line-height:23.00px;color:#a4262c;font-weight:bold;">*</div>
<div class="a t" style="left:1817.83px;top:914.27px;font-family:'Liberation Sans', sans-serif;font-size:23.30px;line-height:23.30px;color:#363636;transform:scaleX(0.9145);">Formula (Sum)</div>
<div class="a t" style="left:1797.50px;top:981.40px;font-family:'Liberation Sans', sans-serif;font-size:22.80px;line-height:22.80px;color:#2a2a2a;-webkit-text-stroke:0.45px #2a2a2a;transform:scaleX(0.9684);">Description</div>
<div class="a t" style="left:1807.71px;top:1031.27px;font-family:'Liberation Sans', sans-serif;font-size:23.30px;line-height:23.30px;color:#a6a6a6;transform:scaleX(1.0173);">Briefly describe the formula</div>
<div class="a t" style="left:2009.46px;top:1150.90px;font-family:'Liberation Sans', sans-serif;font-size:23.50px;line-height:23.50px;color:#2a2a2a;transform:scaleX(0.9675);">Cancel</div>
<div class="a t" style="left:2167.42px;top:1150.90px;font-family:'Liberation Sans', sans-serif;font-size:23.50px;line-height:23.50px;color:#ffffff;-webkit-text-stroke:0.75px #ffffff;transform:scaleX(1.0039);">Update</div>
</div>
</body></html>
